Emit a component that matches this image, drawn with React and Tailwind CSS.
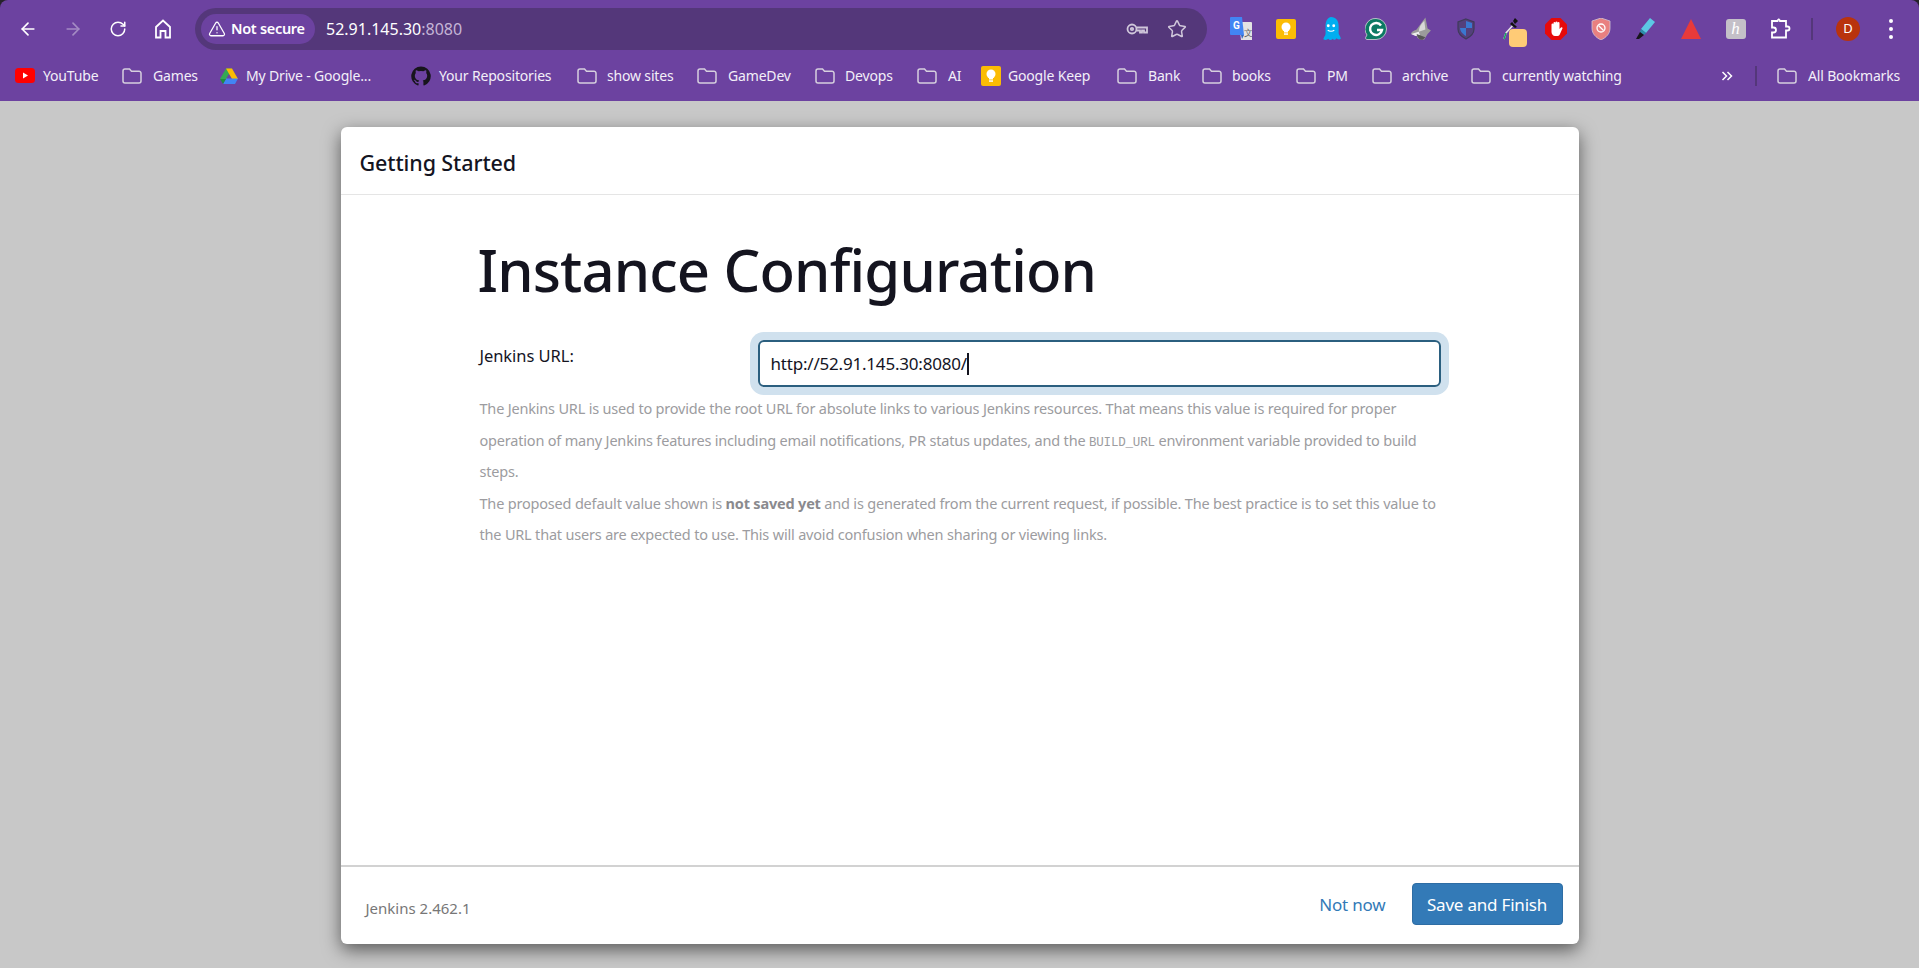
import React from 'react';
import {ArrowLeft, ArrowRight, RotateCw, Star, TriangleAlert} from 'lucide-react';

const Folder = () => (
  <svg width="20" height="16" viewBox="0 0 20 16" fill="none" stroke="#d6d0de" strokeWidth="1.5" className="shrink-0">
    <path d="M1 3a2 2 0 0 1 2-2h4.500l2 2.200H17a2 2 0 0 1 2 2V13a2 2 0 0 1-2 2H3a2 2 0 0 1-2-2z" />
  </svg>
);

const YouTube = () => (
  <svg width="20" height="15" viewBox="0 0 20 15" className="shrink-0">
    <rect width="20" height="15" rx="3.500" fill="#f00" />
    <path d="M8 4.500l5 3-5 3z" fill="#fff" />
  </svg>
);

const Drive = () => (
  <svg width="18" height="16" viewBox="0 0 18 16" className="shrink-0">
    <path d="M6 0h6l-6 10.500H0z" fill="#34a853" transform="translate(0 .5)" />
    <path d="M6 0h6l6 10.500h-6z" fill="#fbbc04" transform="translate(0 .5)" />
    <path d="M3 16l3-5.500h12L15 16z" fill="#4285f4" />
    <path d="M0 11h6L3 16z" fill="#1e8e3e" />
  </svg>
);

const GitHub = () => (
  <svg width="20" height="20" viewBox="0 0 24 24" fill="#17151c" className="shrink-0">
    <path d="M12 .5a11.700 11.700 0 0 0-3.700 22.800c.6.100.8-.3.800-.6v-2c-3.300.7-4-1.600-4-1.600-.5-1.400-1.300-1.800-1.300-1.800-1.100-.7.100-.7.100-.7 1.200.1 1.800 1.200 1.800 1.200 1.100 1.800 2.800 1.300 3.400 1 .1-.8.400-1.300.8-1.600-2.600-.3-5.300-1.300-5.300-5.800 0-1.300.5-2.300 1.200-3.100-.1-.3-.5-1.500.1-3.100 0 0 1-.3 3.200 1.200a11 11 0 0 1 5.800 0c2.200-1.500 3.200-1.200 3.200-1.200.6 1.600.2 2.800.1 3.100.8.800 1.200 1.900 1.200 3.100 0 4.500-2.700 5.500-5.300 5.800.4.400.8 1.100.8 2.200v3.300c0 .3.200.7.800.6A11.700 11.700 0 0 0 12 .5z" />
  </svg>
);

const Keep = () => (
  <svg width="20" height="20" viewBox="0 0 20 20" className="shrink-0">
    <rect width="20" height="20" rx="2" fill="#fbbc04" />
    <circle cx="10" cy="8" r="4.500" fill="#fff" />
    <rect x="8" y="11.500" width="4" height="2" fill="#fff" />
    <rect x="8" y="14.300" width="4" height="1.500" fill="#fff" />
  </svg>
);

const bookmarks = [
  {label: 'YouTube', icon: <YouTube />, box: 'w-[107px] gap-[8px]'},
  {label: 'Games', icon: <Folder />, box: 'w-[98px] gap-[11px]'},
  {label: 'My Drive - Google...', icon: <Drive />, box: 'w-[191px] gap-[8px]'},
  {label: 'Your Repositories', icon: <GitHub />, box: 'w-[166px] gap-[8px]'},
  {label: 'show sites', icon: <Folder />, box: 'w-[120px] gap-[10px]'},
  {label: 'GameDev', icon: <Folder />, box: 'w-[118px] gap-[11px]'},
  {label: 'Devops', icon: <Folder />, box: 'w-[102px] gap-[10px]'},
  {label: 'AI', icon: <Folder />, box: 'w-[64px] gap-[11px]'},
  {label: 'Google Keep', icon: <Keep />, box: 'w-[136px] gap-[7px]'},
  {label: 'Bank', icon: <Folder />, box: 'w-[85px] gap-[11px]'},
  {label: 'books', icon: <Folder />, box: 'w-[94px] gap-[10px]'},
  {label: 'PM', icon: <Folder />, box: 'w-[76px] gap-[11px]'},
  {label: 'archive', icon: <Folder />, box: 'w-[99px] gap-[10px]'},
  {label: 'currently watching', icon: <Folder />, box: 'w-[250px] gap-[11px]'},
];

const Translate = () => (
  <svg width="22" height="24" viewBox="0 0 22 24">
    <path d="M9 5h12a1 1 0 0 1 1 1v17H11z" fill="#e3e3e3" />
    <path d="M1 0h11l2 18H1a1 1 0 0 1-1-1V1a1 1 0 0 1 1-1z" fill="#4285f4" />
    <path d="M11 18h3l-2 4z" fill="#3367c0" />
    <text x="3" y="12" fontSize="10" fontWeight="700" fill="#fff" fontFamily="Roboto, sans-serif">G</text>
    <text x="13.500" y="19" fontSize="9" fill="#666" fontFamily="Roboto, sans-serif">文</text>
  </svg>
);

const Ghost = () => (
  <svg width="20" height="24" viewBox="0 0 18 22">
    <path d="M9 0c4.500 0 7 3.500 7 8v7c0 1.500 2 3 2 5-1.500 1-3 .5-4-.5-1 1.500-2.500 2-3.500.5-1 1.500-3 1.500-4 0-1 1-2.500 1.500-4.500.5 0-2 2-3.500 2-5V8c0-4.500 2.500-8 5-8z" fill="#00aef0" />
    <circle cx="6.500" cy="8" r="1.300" fill="#fff" />
    <circle cx="11.500" cy="8" r="1.300" fill="#fff" />
    <path d="M6 12c1.500 1.500 4.500 1.500 6 0" stroke="#fff" fill="none" strokeWidth="1" />
  </svg>
);

const Grammarly = () => (
  <svg width="22" height="22" viewBox="0 0 22 22">
    <path d="M11 .5a10.500 10.500 0 0 1 0 21H2a1.500 1.500 0 0 1-1.200-2.300L2 17A10.500 10.500 0 0 1 11 .5z" fill="#0b7a63" stroke="#d8d8d8" strokeWidth=".8" />
    <path d="M16 7.500A6 6 0 1 0 17 12h-5" fill="none" stroke="#fff" strokeWidth="2.400" />
  </svg>
);

const Wing = () => (
  <svg width="22" height="25" viewBox="0 0 20 22">
    <path d="M14 0l2 10 3 2-3 3-3 5c-3 1-6 0-7-3l-5-2c0-2 3-3 5-4z" fill="#9b9b9b" />
    <path d="M13 3l1 8-6 2c0-4 2-7 5-10z" fill="#d9d9d9" />
    <path d="M1 15l7-2 1 3-4 1z" fill="#eee" />
    <path d="M6 15l8 3-2 2c-3 1-5-1-6-5z" fill="#555" />
  </svg>
);

const BlueShield = () => (
  <svg width="18" height="22" viewBox="0 0 18 22">
    <path d="M9 1l8 3v7c0 5-4 8-8 10-4-2-8-5-8-10V4z" fill="#54407c" stroke="#3f3b5a" strokeWidth="1.200" />
    <path d="M9 3l6 2v5H9zM9 10H3c.3 4 3.500 6.500 6 8z" fill="#3b78d0" />
  </svg>
);

const Dropper = () => (
  <svg width="16" height="24" viewBox="0 0 16 24">
    <path d="M11 7l-8 9-2 6" stroke="#e5e5e5" strokeWidth="1.500" fill="none" />
    <path d="M3 16l-2 6" stroke="#1aa260" strokeWidth="1.500" />
    <path d="M9 5l5 5-2 1-5-4z" fill="#111" />
    <path d="M10 4l2-3 3 3-3 3z" fill="#111" />
  </svg>
);

const AdBlock = () => (
  <svg width="22" height="22" viewBox="0 0 22 22">
    <path d="M6.500 0h9L22 6.500v9L15.500 22h-9L0 15.500v-9z" fill="#e60a0a" />
    <path d="M6.500 12V6.500a1 1 0 0 1 2 0V5a1 1 0 0 1 2 0v-.500a1 1 0 0 1 2 0V5a1 1 0 0 1 2 0v6l1.500-1.500c1-.8 2 .2 1.300 1.200L14.500 17a2.500 2.500 0 0 1-2 1H10c-2 0-3.500-2-3.500-4z" fill="#fff" />
  </svg>
);

const PinkShield = () => (
  <svg width="20" height="22" viewBox="0 0 20 22">
    <path d="M10 0l9 3v7c0 6-4 9.500-9 12-5-2.500-9-6-9-12V3z" fill="#e98080" stroke="#d0c4d4" strokeWidth=".8" />
    <circle cx="10" cy="10" r="4" fill="none" stroke="#fff" strokeWidth="1.300" />
    <path d="M7.500 7.500l5 5" stroke="#fff" strokeWidth="1.300" />
  </svg>
);

const Marker = () => (
  <svg width="22" height="24" viewBox="0 0 22 24">
    <path d="M15 1l5 4-9 11-5-4z" fill="#5cc8e4" />
    <path d="M6 12l5 4-2 2-4-3z" fill="#2a8fa8" />
    <path d="M5 15l4 3-5 4-3 0z" fill="#17151c" />
  </svg>
);

const KamiH = () => (
  <div className="flex h-[20px] w-[20px] items-center justify-center rounded-[3px] bg-[#c4c0c8] font-['Liberation_Serif',serif] text-[17px] italic text-white">
    h
  </div>
);

const Puzzle = () => (
  <svg width="20" height="22" viewBox="0 0 20 22" fill="none" stroke="#fff" strokeWidth="1.800">
    <path d="M1 3h5.500a2 2 0 0 1 1 -1.500h.5a2 2 0 0 1 1 1.500H15v5.500h1.500a2 2 0 0 1 0 4H15V19.500H1v-5h1.500a2.500 2.500 0 0 0 0-5H1z" />
  </svg>
);

const extensions = [
  <Translate key="translate" />,
  <Keep key="keep" />,
  <Ghost key="ghost" />,
  <Grammarly key="grammarly" />,
  <Wing key="wing" />,
  <BlueShield key="shield" />,
  <Dropper key="dropper" />,
  <AdBlock key="adblock" />,
  <PinkShield key="pink" />,
  <Marker key="marker" />,
  <div key="triangle" className="h-0 w-0 border-x-[10px] border-b-[20px] border-x-transparent border-b-[#e83a3a]" />,
  <KamiH key="kami" />,
  <Puzzle key="puzzle" />,
];

const Toolbar = () => (
  <div className="flex h-[60px] items-center pb-[2px] pl-[5px]">
    <button className="flex w-[45px] justify-center text-white"><ArrowLeft size={20} strokeWidth={2} /></button>
    <button className="flex w-[45px] justify-center text-[#a48bc4]"><ArrowRight size={20} strokeWidth={2} /></button>
    <button className="flex w-[45px] justify-center text-white"><RotateCw size={18} strokeWidth={2} /></button>
    <button className="flex w-[45px] justify-center text-white">
      <svg width="18" height="20" viewBox="0 0 18 20" fill="none" stroke="#fff" strokeWidth="1.800">
        <path d="M2 8l7-6.500L16 8v10.500h-4.500V12h-5v6.500H2z" />
      </svg>
    </button>
    <div className="ml-[10px] flex h-[42px] w-[1012px] items-center rounded-full bg-[#54377a] pl-[6px] pr-[20px]">
      <div className="flex h-[30px] w-[114px] items-center gap-[5px] rounded-full bg-[#6c42a0] pl-[7px]">
        <TriangleAlert size={18} className="text-white" strokeWidth={1.7} />
        <span className="text-[14.500px] font-semibold tracking-[-0.3px] text-white">Not secure</span>
      </div>
      <div className="ml-[11px] flex-1 text-[16px] text-white">
        52.91.145.30<span className="text-[#c4b5d6]">:8080</span>
      </div>
      <svg width="22" height="14" viewBox="0 0 22 14" fill="none" stroke="#cfc6da" strokeWidth="1.800" className="mr-[19px]">
        <circle cx="6" cy="7" r="4.500" />
        <circle cx="6" cy="7" r="1.200" />
        <path d="M10.500 5.500H21v5h-3v-2h-2v2h-2v-2h-3.500" />
      </svg>
      <Star size={20} className="text-[#cfc6da]" strokeWidth={1.800} />
    </div>
    <div className="relative ml-[11px] flex items-center">
      {extensions.map((icon, i) => (
        <div key={i} className="flex h-[30px] w-[45px] items-center justify-center">{icon}</div>
      ))}
      <div className="absolute left-[291px] top-[15px] h-[18px] w-[18px] rounded-[4px] bg-[#ffcb76]" />
      <div className="mx-[8px] h-[22px] w-[2px] bg-[#54377a]" />
      <div className="ml-[15px] flex h-[24px] w-[24px] items-center justify-center rounded-full bg-[#b9330d] text-[13px] text-white">D</div>
      <div className="ml-[29px] flex flex-col gap-[4px]">
        <span className="h-[4px] w-[4px] rounded-full bg-white" />
        <span className="h-[4px] w-[4px] rounded-full bg-white" />
        <span className="h-[4px] w-[4px] rounded-full bg-white" />
      </div>
    </div>
  </div>
);

const BookmarksBar = () => (
  <div className="flex h-[41px] items-center pb-[10px] pl-[15px] text-[14px] tracking-[-0.17px] text-[#f3eff8]">
    {bookmarks.map(b => (
      <div key={b.label} className={`flex shrink-0 items-center ${b.box}`}>
        {b.icon}
        <span className="whitespace-nowrap">{b.label}</span>
      </div>
    ))}
    <svg width="12" height="12" viewBox="0 0 12 12" fill="none" stroke="#fff" strokeWidth="1.500">
      <path d="M1.500 2l4 4-4 4M6.500 2l4 4-4 4" />
    </svg>
    <div className="ml-[22px] h-[20px] w-[2px] bg-[#54377a]" />
    <div className="ml-[20px] flex items-center gap-[11px]">
      <Folder />
      <span className="whitespace-nowrap">All Bookmarks</span>
    </div>
  </div>
);

const SetupCard = () => (
  <div className="mx-auto mt-[26px] flex h-[817px] w-[1238px] flex-col rounded-[6px] bg-white shadow-[0_6px_18px_rgba(0,0,0,0.55)]">
    <div className="flex h-[68px] items-center border-b border-[#e5e5e5] pl-[19px] pt-[5px] text-[21.500px] font-medium tracking-[-0.1px] text-[#14141f]">
      Getting Started
    </div>
    <div className="flex-1 pl-[137px]">
      <h1 className="mt-[40px] text-[58px] font-medium leading-[70px] tracking-[-0.85px] text-[#14141f]">Instance Configuration</h1>
      <div className="mt-[35px] flex items-start">
        <label className="ml-[2px] w-[278px] pt-[4px] text-[16.500px] tracking-[-0.05px] text-[#14141f]">Jenkins URL:</label>
        <div className="flex h-[47px] w-[683px] items-center rounded-[6px] border-2 border-[#2b5f7f] pl-[11px] text-[17px] tracking-[-0.2px] text-[#14141f] shadow-[0_0_0_8px_#d0e1ee]">
          http://52.91.145.30:8080/
          <span className="h-[22px] w-[2px] bg-[#14141f]" />
        </div>
      </div>
      <div className="ml-[2px] mt-[6px] text-[14.500px] leading-[31.500px] tracking-[-0.19px] text-[#9c9ca0]">
        <div>
          The Jenkins URL is used to provide the root URL for absolute links to various Jenkins resources. That means this value is required for proper
          <br />
          operation of many Jenkins features including email notifications, PR status updates, and the <code className="font-['Liberation_Mono',monospace] text-[12.500px] leading-none">BUILD_URL</code> environment variable provided to build
          <br />
          steps.
        </div>
        <div>
          The proposed default value shown is <b className="font-bold text-[#8a8a8e]">not saved yet</b> and is generated from the current request, if possible. The best practice is to set this value to
          <br />
          the URL that users are expected to use. This will avoid confusion when sharing or viewing links.
        </div>
      </div>
    </div>
    <div className="flex h-[79px] items-center border-t-2 border-[#d2d2d2] pb-[4px] pl-[25px] pr-[16px]">
      <span className="mt-[9px] text-[15px] text-[#777]">Jenkins 2.462.1</span>
      <button className="ml-auto pt-[3px] text-[17px] tracking-[-0.2px] text-[#337ab7]">Not now</button>
      <button className="ml-[26px] h-[42px] w-[151px] rounded-[4px] border border-[#2e6da4] bg-[#337ab7] pt-[3px] text-[17px] tracking-[-0.2px] text-white">
        Save and Finish
      </button>
    </div>
  </div>
);

export default function App() {
  return (
    <div className="flex h-screen flex-col overflow-hidden bg-[#26222b] font-['Noto_Sans','Open_Sans',sans-serif]">
      <div className="rounded-t-[8px] bg-[#6c42a0]">
        <Toolbar />
        <BookmarksBar />
      </div>
      <div className="flex-1 bg-[#c8c8c8]">
        <SetupCard />
      </div>
    </div>
  );
}
